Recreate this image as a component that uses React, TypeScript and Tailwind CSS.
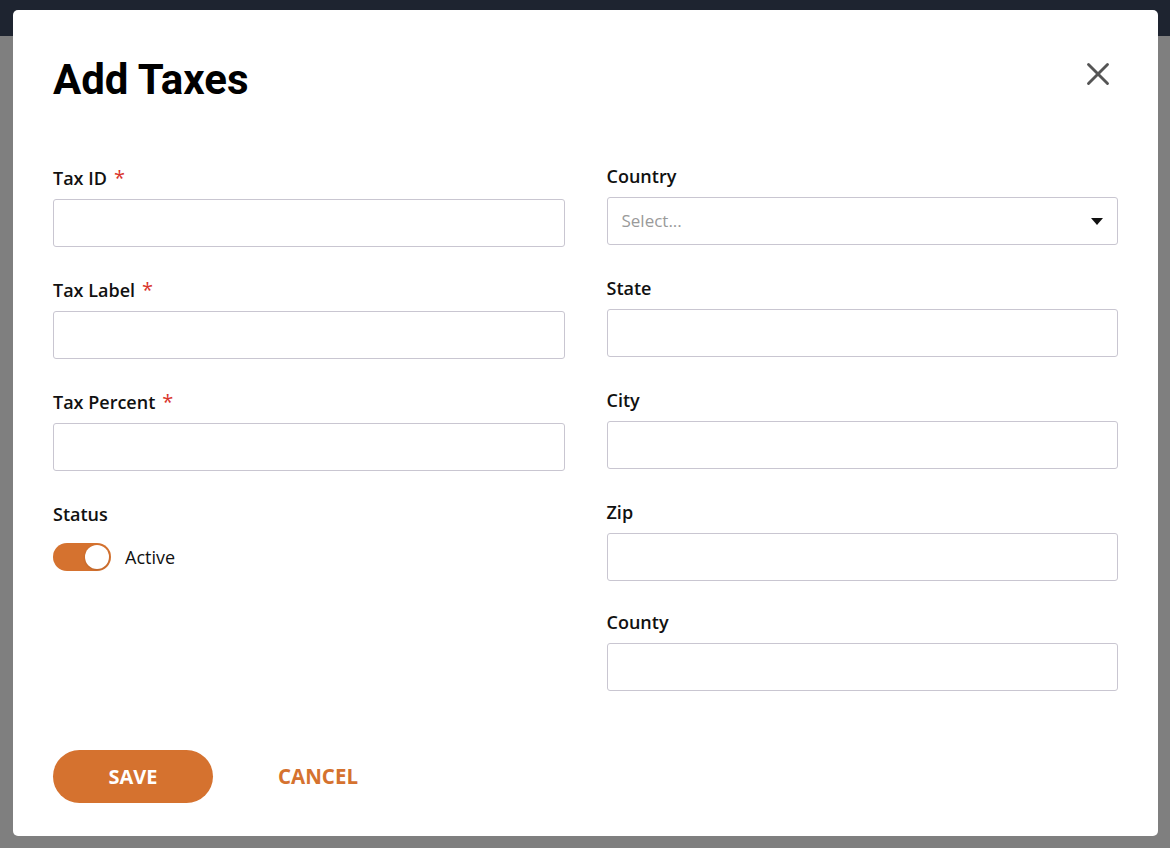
import { X } from 'lucide-react';

const Field = ({ label, required, placeholder }: { label: string; required?: boolean; placeholder?: string }) => (
  <div className="flex flex-col">
    <label className="h-[22px] text-[18px] font-semibold leading-[22px] text-[#111]">
      {label}
      {required && <span className="ml-[7px] text-[20px] font-normal text-[#d9342b]">*</span>}
    </label>
    {placeholder ? (
      <div className="mt-[10px] flex h-[48px] items-center justify-between rounded-[3px] border border-[#c9c6d1] px-[14px] text-[17px] text-[#9a9a9a]">
        <span>{placeholder}</span>
        <svg width="12" height="7" viewBox="0 0 12 7"><path d="M0 0h12L6 7z" fill="#111" /></svg>
      </div>
    ) : (
      <input className="mt-[10px] h-[48px] rounded-[3px] border border-[#c9c6d1] px-[14px] outline-none" />
    )}
  </div>
);

const App = () => {
  return (
    <div className="relative h-[848px] w-[1170px] overflow-hidden bg-[#7f7f7f]" style={{ fontFamily: '"Open Sans", sans-serif' }}>
      <div className="h-[36px] bg-[#1e2430]" />
      <div className="absolute left-[13px] top-[10px] h-[826px] w-[1145px] rounded-[5px] bg-white px-[40px] pt-[52px]">
        <div className="flex items-start justify-between">
          <h1 className="text-[42px] font-bold leading-[36px] text-black" style={{ fontFamily: 'Roboto, sans-serif' }}>Add Taxes</h1>
          <X className="mr-[1px] mt-[-7px] h-[38px] w-[38px] text-[#555]" strokeWidth={1.8} />
        </div>
        <div className="mt-[67px] grid grid-cols-2 gap-x-[42px]">
          <div className="flex flex-col gap-[32px] pt-[2px]">
            <Field label="Tax ID" required />
            <Field label="Tax Label" required />
            <Field label="Tax Percent" required />
            <div className="flex flex-col">
              <span className="h-[22px] text-[18px] font-semibold leading-[22px] text-[#111]">Status</span>
              <div className="mt-[18px] flex items-center gap-[14px]">
                <div className="flex h-[28px] w-[58px] items-center justify-end rounded-full bg-[#d5722f] pr-[2px]">
                  <div className="h-[24px] w-[24px] rounded-full bg-white shadow" />
                </div>
                <span className="text-[18px] text-[#111]">Active</span>
              </div>
            </div>
          </div>
          <div className="flex flex-col gap-[32px]">
            <Field label="Country" placeholder="Select..." />
            <Field label="State" />
            <Field label="City" />
            <Field label="Zip" />
            <div className="-mt-[2px]"><Field label="County" /></div>
          </div>
        </div>
        <div className="mt-[59px] flex items-center gap-[65px]">
          <button className="h-[53px] w-[160px] rounded-full bg-[#d5722f] text-[20px] font-bold text-white">SAVE</button>
          <button className="text-[20.5px] font-bold text-[#d5722f]">CANCEL</button>
        </div>
      </div>
    </div>
  );
};

export default App;
